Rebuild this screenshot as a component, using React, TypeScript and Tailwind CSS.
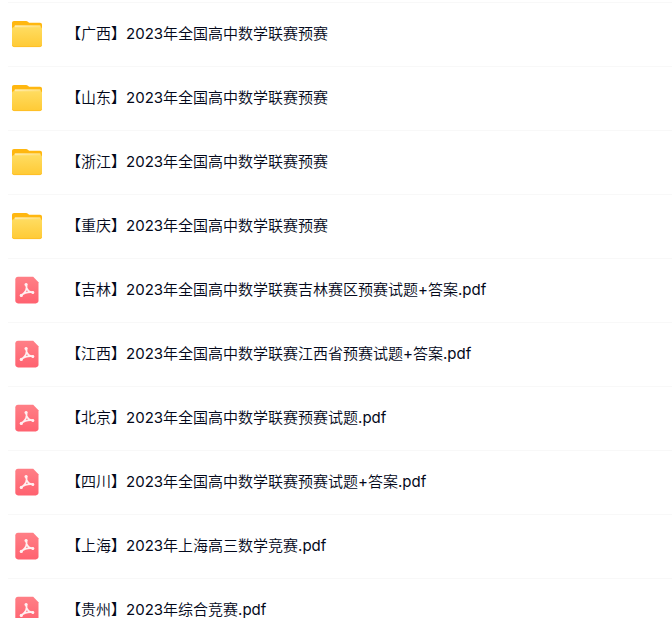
type FileItem = {
  name: string;
  type: "folder" | "pdf";
};

const files: FileItem[] = [
  { name: "【广西】2023年全国高中数学联赛预赛", type: "folder" },
  { name: "【山东】2023年全国高中数学联赛预赛", type: "folder" },
  { name: "【浙江】2023年全国高中数学联赛预赛", type: "folder" },
  { name: "【重庆】2023年全国高中数学联赛预赛", type: "folder" },
  { name: "【吉林】2023年全国高中数学联赛吉林赛区预赛试题+答案.pdf", type: "pdf" },
  { name: "【江西】2023年全国高中数学联赛江西省预赛试题+答案.pdf", type: "pdf" },
  { name: "【北京】2023年全国高中数学联赛预赛试题.pdf", type: "pdf" },
  { name: "【四川】2023年全国高中数学联赛预赛试题+答案.pdf", type: "pdf" },
  { name: "【上海】2023年上海高三数学竞赛.pdf", type: "pdf" },
  { name: "【贵州】2023年综合竞赛.pdf", type: "pdf" },
];

function FolderIcon() {
  return (
    <svg viewBox="0 0 32 32" className="size-8">
      <defs>
        <linearGradient id="folder-front" x1="0" y1="0" x2="0" y2="1">
          <stop offset="0" stopColor="#ffdc60" />
          <stop offset="1" stopColor="#ffca35" />
        </linearGradient>
        <linearGradient id="folder-paper" x1="0" y1="0" x2="1" y2="0">
          <stop offset="0" stopColor="#ffebaa" />
          <stop offset="1" stopColor="#ffdf78" />
        </linearGradient>
      </defs>
      <path
        d="M1 6c0-1.200.8-2 2-2h12c.8 0 1.300.2 1.900.7l1.200 1.100H29c1.200 0 2 .8 2 2V22H1Z"
        fill="#ffb710"
      />
      <path d="M3.500 12V9.500c0-.8.5-1.300 1.300-1.300h23.400c.9 0 1.500.5 1.500 1.300V12Z" fill="url(#folder-paper)" />
      <path
        d="M1 12c0-1.100.7-1.700 1.800-1.700h26.400c1.100 0 1.800.6 1.800 1.700v15.800c0 1.400-.9 2.200-2.200 2.200H3.200C1.900 30 1 29.200 1 27.800Z"
        fill="url(#folder-front)"
      />
      <path d="M1.300 28.300c.4.900 1.100 1.300 2 1.300h25.400c.9 0 1.600-.4 2-1.300" fill="none" stroke="#ffbd24" strokeWidth=".9" />
    </svg>
  );
}

function PdfIcon() {
  return (
    <svg viewBox="0 -0.8 32 32" className="size-8">
      <defs>
        <linearGradient id="pdf-page" x1="0" y1="0" x2="0" y2="1">
          <stop offset="0" stopColor="#ff7f86" />
          <stop offset="1" stopColor="#ff6270" />
        </linearGradient>
      </defs>
      <path
        d="M7 3h15.200l5.300 5.500v18.300c0 1.700-1.100 2.800-2.700 2.800H7c-1.600 0-2.700-1.100-2.700-2.800v-21C4.300 4.100 5.400 3 7 3Z"
        fill="url(#pdf-page)"
      />
      <path
        d="M15.100 10.500c.1 3 .9 5.300 2.500 6.600 1.200 1 2.700 1.300 4.400 1.200M15.100 10.500c1.600 4.100-.6 8.300-4.900 11.300M10.200 21.600c2.500-2.300 6.600-3.700 11.700-3.200"
        fill="none"
        stroke="#fff0f1"
        strokeWidth="1.700"
        strokeLinecap="round"
        strokeLinejoin="round"
      />
      <circle cx="15.100" cy="10.700" r="1.600" fill="#fff0f1" />
      <circle cx="10.300" cy="21.600" r="1.600" fill="#fff0f1" />
      <circle cx="21.800" cy="18.600" r="1.500" fill="#fff0f1" />
    </svg>
  );
}

function FileName({ name }: { name: string }) {
  return (
    <p className="-ml-px whitespace-nowrap font-['Noto_Sans_CJK_SC',sans-serif] text-[15px] leading-6 font-[350] text-[#03081a]">
      {name.split(/([\w.+]+)/).map((part, i) =>
        i % 2 ? (
          <span key={i} className="font-['Inter',sans-serif] leading-none font-normal">
            {part}
          </span>
        ) : (
          part
        ),
      )}
    </p>
  );
}

export default function App() {
  return (
    <main className="h-[618px] overflow-hidden bg-white pl-2">
      <ul className="mt-0.5 border-t border-[#f8f8f8]">
        {files.map((item) => (
          <li
            key={item.name}
            className="flex h-16 items-center gap-6 border-b border-[#f8f8f8] pb-[3px] pl-[3px]"
          >
            {item.type === "folder" ? <FolderIcon /> : <PdfIcon />}
            <FileName name={item.name} />
          </li>
        ))}
      </ul>
    </main>
  );
}
